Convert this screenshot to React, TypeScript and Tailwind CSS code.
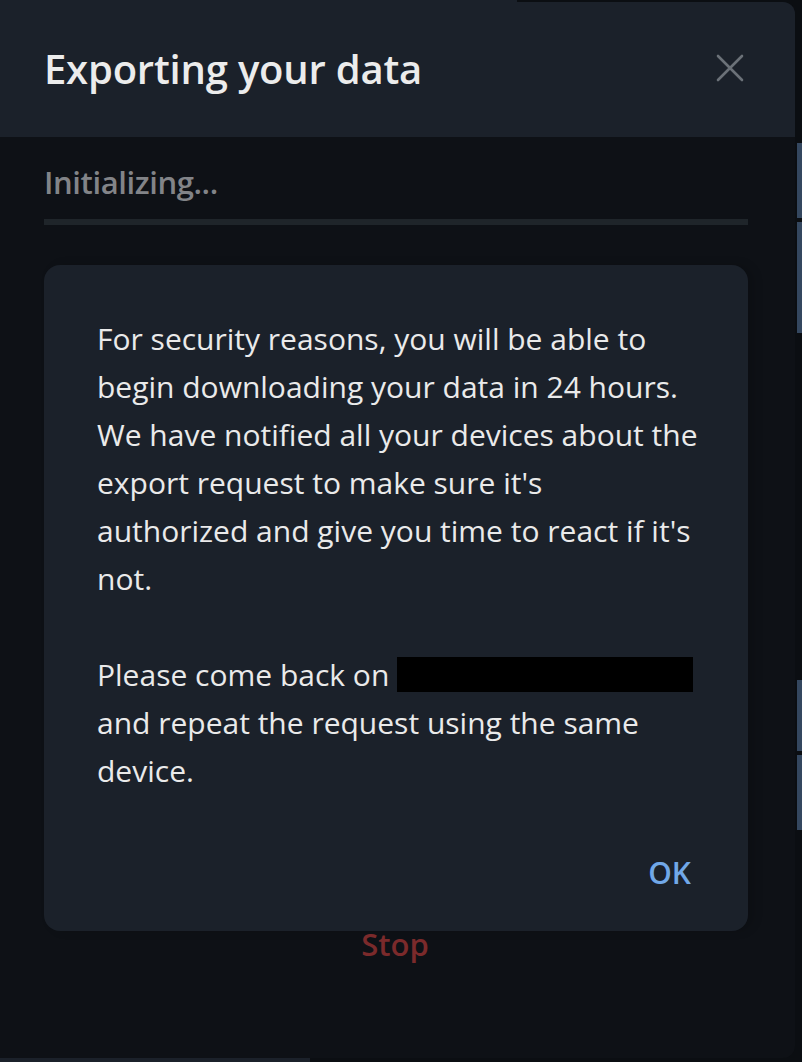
import React from "react";

export default function App() {
  const font = { fontFamily: '"Open Sans", "Noto Sans", sans-serif' };
  return (
    <div className="relative w-[802px] h-[1062px] overflow-hidden bg-[#0b0e12]" style={font}>
      {/* underlying page fragments */}
      <div className="absolute left-0 top-0 w-[517px] h-[3px] bg-[#1b212a]" />
      <div className="absolute left-[797px] top-[143px] w-[8px] h-[75px] bg-[#34475f]" />
      <div className="absolute left-[797px] top-[222px] w-[8px] h-[111px] bg-[#34475f]" />
      <div className="absolute left-[797px] top-[680px] w-[8px] h-[71px] bg-[#34475f]" />
      <div className="absolute left-[797px] top-[755px] w-[8px] h-[75px] bg-[#34475f]" />
      <div className="absolute left-0 top-[1058px] w-[310px] h-[4px] bg-[#1b212a]" />

      {/* dialog */}
      <div className="absolute left-0 top-[2px] w-[795px] h-[1056px] rounded-tr-[12px] rounded-br-[12px] bg-[#0e1116] overflow-hidden flex flex-col">
        <div className="h-[135px] bg-[#1b212a] flex items-center justify-between pl-[44px] pr-[51px] pb-[2px]">
          <h1 className="text-[40px] font-semibold text-[#ececec] leading-none tracking-[-0.2px]">Exporting your data</h1>
          <svg width="28" height="28" viewBox="0 0 28 28" className="mt-[-1px]">
            <path d="M2 2 L26 26 M26 2 L2 26" stroke="#6b7178" strokeWidth="2.6" strokeLinecap="round" />
          </svg>
        </div>
        <div className="pl-[44px] pt-[26px] flex flex-col">
          <div className="text-[31px] leading-[38px] font-semibold text-[#828488] tracking-[-0.4px]">Initializing...</div>
          <div className="mt-[18px] h-[6px] w-[704px] bg-[#1f252a]" />
          <div className="mt-[40px] w-[704px] rounded-[16px] bg-[#1b212a] shadow-[6px_0_10px_rgba(0,0,0,0.15)] pl-[53px] pr-[48px] pt-[50px] pb-[38px] flex flex-col">
            <p className="text-[30px] leading-[48px] text-[#eaeaea] m-0">
              For security reasons, you will be able to begin downloading your data in 24 hours. We have notified all your devices about the export request to make sure it's authorized and give you time to react if it's not.
            </p>
            <p className="text-[30px] leading-[48px] text-[#eaeaea] mt-[48px]">
              Please come back on{" "}
              <span className="inline-block align-middle w-[296px] h-[35px] bg-black mt-[-6px]" />
              {" "}and repeat the request using the same device.
            </p>
            <div className="flex justify-end mt-[58px] pr-[9px]">
              <span className="text-[30px] leading-[40px] font-semibold text-[#71a8e8]">OK</span>
            </div>
          </div>
          <div className="w-[704px] flex justify-center mt-[-7px] pr-[2px]">
            <span className="text-[31px] leading-[40px] font-semibold text-[#7b2a2b]">Stop</span>
          </div>
        </div>
      </div>
    </div>
  );
}
